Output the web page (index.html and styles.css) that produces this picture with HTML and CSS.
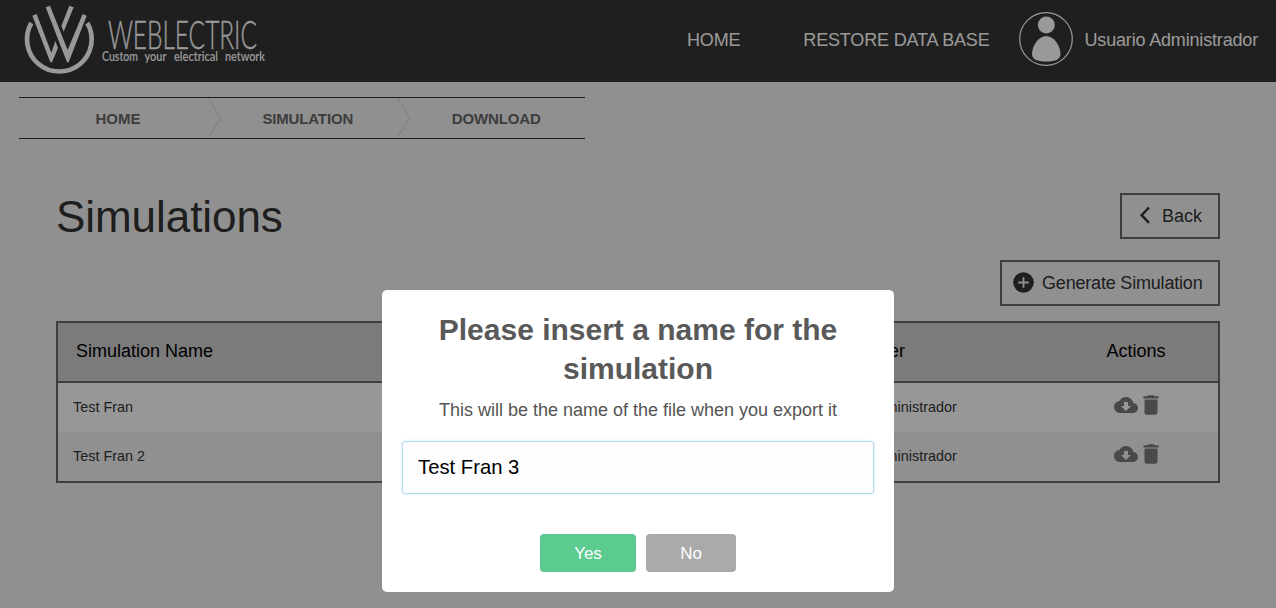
FILE: index.html
```html
<!DOCTYPE html>
<html lang="en">
<head>
<meta charset="utf-8">
<title>Weblectric - Simulations</title>
<link rel="stylesheet" href="styles.css">
</head>
<body>
<svg class="sprite" width="0" height="0">
  <symbol id="cloud" viewBox="0 0 24 24"><path d="M19.350 10.040C18.670 6.590 15.640 4 12 4 9.110 4 6.600 5.640 5.350 8.040 2.340 8.360 0 10.910 0 14c0 3.310 2.690 6 6 6h13c2.760 0 5-2.240 5-5 0-2.640-2.050-4.780-4.650-4.960zM17 13l-5 5-5-5h3V9h4v4h3z"/></symbol>
  <symbol id="trash" viewBox="0 0 24 24"><path d="M6 19c0 1.100.9 2 2 2h8c1.100 0 2-.9 2-2V7H6v12zM19 4h-3.500l-1-1h-5l-1 1H5v2h14V4z"/></symbol>
</svg>
<header class="topbar">
  <svg class="logo" width="250" height="78" viewBox="0 0 250 78">
    <g transform="scale(.33333)">
      <path class="logo-ring" d="M34 69A97 97 0 1 0 202 69"/>
      <path d="M37 47L50 42L94 158L106 123L114 144L96 187H91ZM77 22L90 17L143 150L188 42L200 47L146 187H141ZM148 17L161 22L131 95L124 78Z"/>
    </g>
    <text class="logo-name" x="88" y="49" textLength="149" lengthAdjust="spacingAndGlyphs">WEBLECTRIC</text>
    <text class="logo-tag" x="82" y="61" textLength="36" lengthAdjust="spacingAndGlyphs">Custom</text>
    <text class="logo-tag" x="124.500" y="61" textLength="22" lengthAdjust="spacingAndGlyphs">your</text>
    <text class="logo-tag" x="154" y="61" textLength="44" lengthAdjust="spacingAndGlyphs">electrical</text>
    <text class="logo-tag" x="205" y="61" textLength="40" lengthAdjust="spacingAndGlyphs">network</text>
  </svg>
  <nav class="nav">
    <span class="nav-link">HOME</span>
    <span class="nav-link">RESTORE DATA BASE</span>
  </nav>
  <div class="user">
    <svg width="54" height="54" viewBox="0 0 54 54">
      <circle class="ring" cx="27" cy="27" r="26.300"/>
      <circle cx="27.300" cy="13" r="8.500"/>
      <path d="M27.300 24C35 24 41.500 34 41.500 42C41.500 47 37 49.500 27.300 49.500S13 47 13 42C13 34 19.500 24 27.300 24Z"/>
    </svg>
    <span class="user-name">Usuario Administrador</span>
  </div>
</header>
<div class="crumbs">
  <span class="crumb">HOME</span>
  <svg class="crumb-sep" width="13" height="40" viewBox="0 0 13 40"><path d="M1 1L12.500 20L1 39"/></svg>
  <span class="crumb">SIMULATION</span>
  <svg class="crumb-sep" width="13" height="40" viewBox="0 0 13 40"><path d="M1 1L12.500 20L1 39"/></svg>
  <span class="crumb">DOWNLOAD</span>
</div>
<main class="main">
  <div class="head">
    <h1 class="title">Simulations</h1>
    <div class="actions">
      <div class="btn btn-back">
        <svg width="12" height="18" viewBox="0 0 12 18"><path class="chevron" d="M10 1.500L2.600 9.200L10 16.900"/></svg>
        <span>Back</span>
      </div>
      <div class="btn btn-generate">
        <svg width="21" height="21" viewBox="0 0 21 21"><circle class="plus-disc" cx="10.500" cy="10.500" r="10.300"/><path class="plus" d="M10.500 5.200V15.800M5.200 10.500H15.800"/></svg>
        <span>Generate Simulation</span>
      </div>
    </div>
  </div>
  <div class="table">
    <div class="row row-head"><span class="c-name">Simulation Name</span><span>User</span><span>Actions</span></div>
    <div class="row row-light"><span class="c-name">Test Fran</span><span>Usuario Administrador</span><span class="icons"><svg width="24" height="24"><use href="#cloud"/></svg><svg class="bin" width="26" height="26"><use href="#trash"/></svg></span></div>
    <div class="row"><span class="c-name">Test Fran 2</span><span>Usuario Administrador</span><span class="icons"><svg width="24" height="24"><use href="#cloud"/></svg><svg class="bin" width="26" height="26"><use href="#trash"/></svg></span></div>
  </div>
</main>
<div class="overlay">
  <div class="modal">
    <h2 class="modal-title">Please insert a name for the simulation</h2>
    <p class="modal-text">This will be the name of the file when you export it</p>
    <input class="modal-input" type="text" value="Test Fran 3">
    <div class="modal-buttons">
      <button class="mbtn mbtn-yes">Yes</button>
      <button class="mbtn mbtn-no">No</button>
    </div>
  </div>
</div>
</body>
</html>
```
FILE: styles.css
```css
* { box-sizing: border-box; }
body {
  margin: 0;
  height: 608px;
  overflow: hidden;
  background: #f1f1f1;
  color: #333;
  font-family: "Liberation Sans", Arial, sans-serif;
  font-size: 18px;
}
svg { display: block; flex: none; }
.sprite { position: absolute; }

.topbar {
  display: flex;
  align-items: center;
  height: 82px;
  padding: 0 18px 4px 20px;
  background: #343434;
  color: #fff;
  letter-spacing: -.17px;
}
.logo { fill: #fff; letter-spacing: 0; overflow: visible; }
.logo-ring { fill: none; stroke: #fff; stroke-width: 14; }
.logo-name { font-family: Lato, sans-serif; font-weight: 300; font-size: 40px; stroke: #fff; stroke-width: .3; }
.logo-tag { font-family: Lato, sans-serif; font-weight: 600; font-size: 12.500px; }
.nav { display: flex; gap: 63px; margin-left: auto; margin-right: 30px; padding-top: 2px; }
.user { display: flex; align-items: center; gap: 11px; fill: #fff; }
.user-name { padding-top: 2px; }
.ring { fill: none; stroke: #fff; stroke-width: 1.200; }

.crumbs {
  display: flex;
  align-items: center;
  width: 566px;
  height: 42px;
  margin: 15px 0 0 19px;
  border-top: 1px solid #343434;
  border-bottom: 1px solid #343434;
  font-size: 15px;
  font-weight: bold;
  letter-spacing: -.15px;
  color: #666;
}
.crumb { flex: 1; text-align: center; }
.crumb:first-child { flex: 0 0 189px; padding-left: 9px; letter-spacing: 0; }
.crumb:nth-child(3) { padding-right: 2px; }
.crumb:last-child { padding-right: 2px; }
.crumb-sep { fill: none; stroke: #d2d2d2; }

.main { padding: 54px 56px 0; }
.head { display: flex; justify-content: space-between; height: 128px; }
.title { margin: -2px 0 0; font-size: 44px; line-height: 51px; font-weight: normal; letter-spacing: -.06px; }
.actions { display: flex; flex-direction: column; align-items: flex-end; gap: 21px; }
.btn {
  display: flex;
  align-items: center;
  height: 46px;
  border: 2px solid #686868;
}
.btn-back { width: 100px; padding-left: 17px; gap: 11px; }
.btn-generate { width: 220px; padding-left: 11px; gap: 8px; letter-spacing: -.19px; }
.btn-back svg { margin-top: -2px; }
.btn-generate svg { margin-top: -1px; }
.chevron { fill: none; stroke: #333; stroke-width: 2.400; }
.plus-disc { fill: #333; }
.plus { stroke: #f1f1f1; stroke-width: 1.800; }

.table { border: 2px solid #686868; }
.row {
  display: grid;
  grid-template-columns: 660px 336px 1fr;
  align-items: center;
  height: 49px;
  padding-bottom: 2px;
  font-size: 14.400px;
  text-align: center;
}
.row-light { background: #fcfcfc; }
.row-head {
  height: 60px;
  background: #cdcdcd;
  border-bottom: 2px solid #686868;
  font-size: 18px;
  color: #000;
}
.c-name { text-align: left; padding-left: 15px; }
.row-head .c-name { padding-left: 18px; }
.icons { display: flex; justify-content: center; align-items: center; fill: #7a7a7a; padding: 0 0 4px 5px; }
.bin { margin-right: -1px; }

.overlay {
  position: fixed;
  inset: 0;
  display: flex;
  align-items: flex-end;
  justify-content: center;
  padding-bottom: 16px;
  background: rgba(0, 0, 0, .4);
}
.modal {
  width: 512px;
  height: 302px;
  padding: 20px;
  border-radius: 5px;
  background: #fff;
  text-align: center;
  color: #545454;
}
.modal-title { margin: 0 0 12px; font-size: 30px; line-height: 39px; color: #595959; }
.modal-text { margin: 0; font-size: 18px; line-height: 20px; }
.modal-input {
  display: block;
  width: 472px;
  height: 53px;
  margin: 21px 0 40px;
  padding: 0 15px;
  border: 1px solid #b4dbed;
  border-radius: 3px;
  outline: none;
  background: #fdfdfe;
  box-shadow: 0 0 3px #c4e6f5;
  font: 20.250px "Liberation Sans", Arial, sans-serif;
  color: #000;
}
.modal-buttons { display: flex; justify-content: center; gap: 10px; }
.mbtn {
  height: 38px;
  padding: 1px 0 0;
  border: 0;
  border-radius: 4px;
  font: 17px "Liberation Sans", Arial, sans-serif;
  color: #fff;
}
.mbtn-yes { width: 96px; background: #5bcb90; }
.mbtn-no { width: 90px; background: #aaa; }
```
